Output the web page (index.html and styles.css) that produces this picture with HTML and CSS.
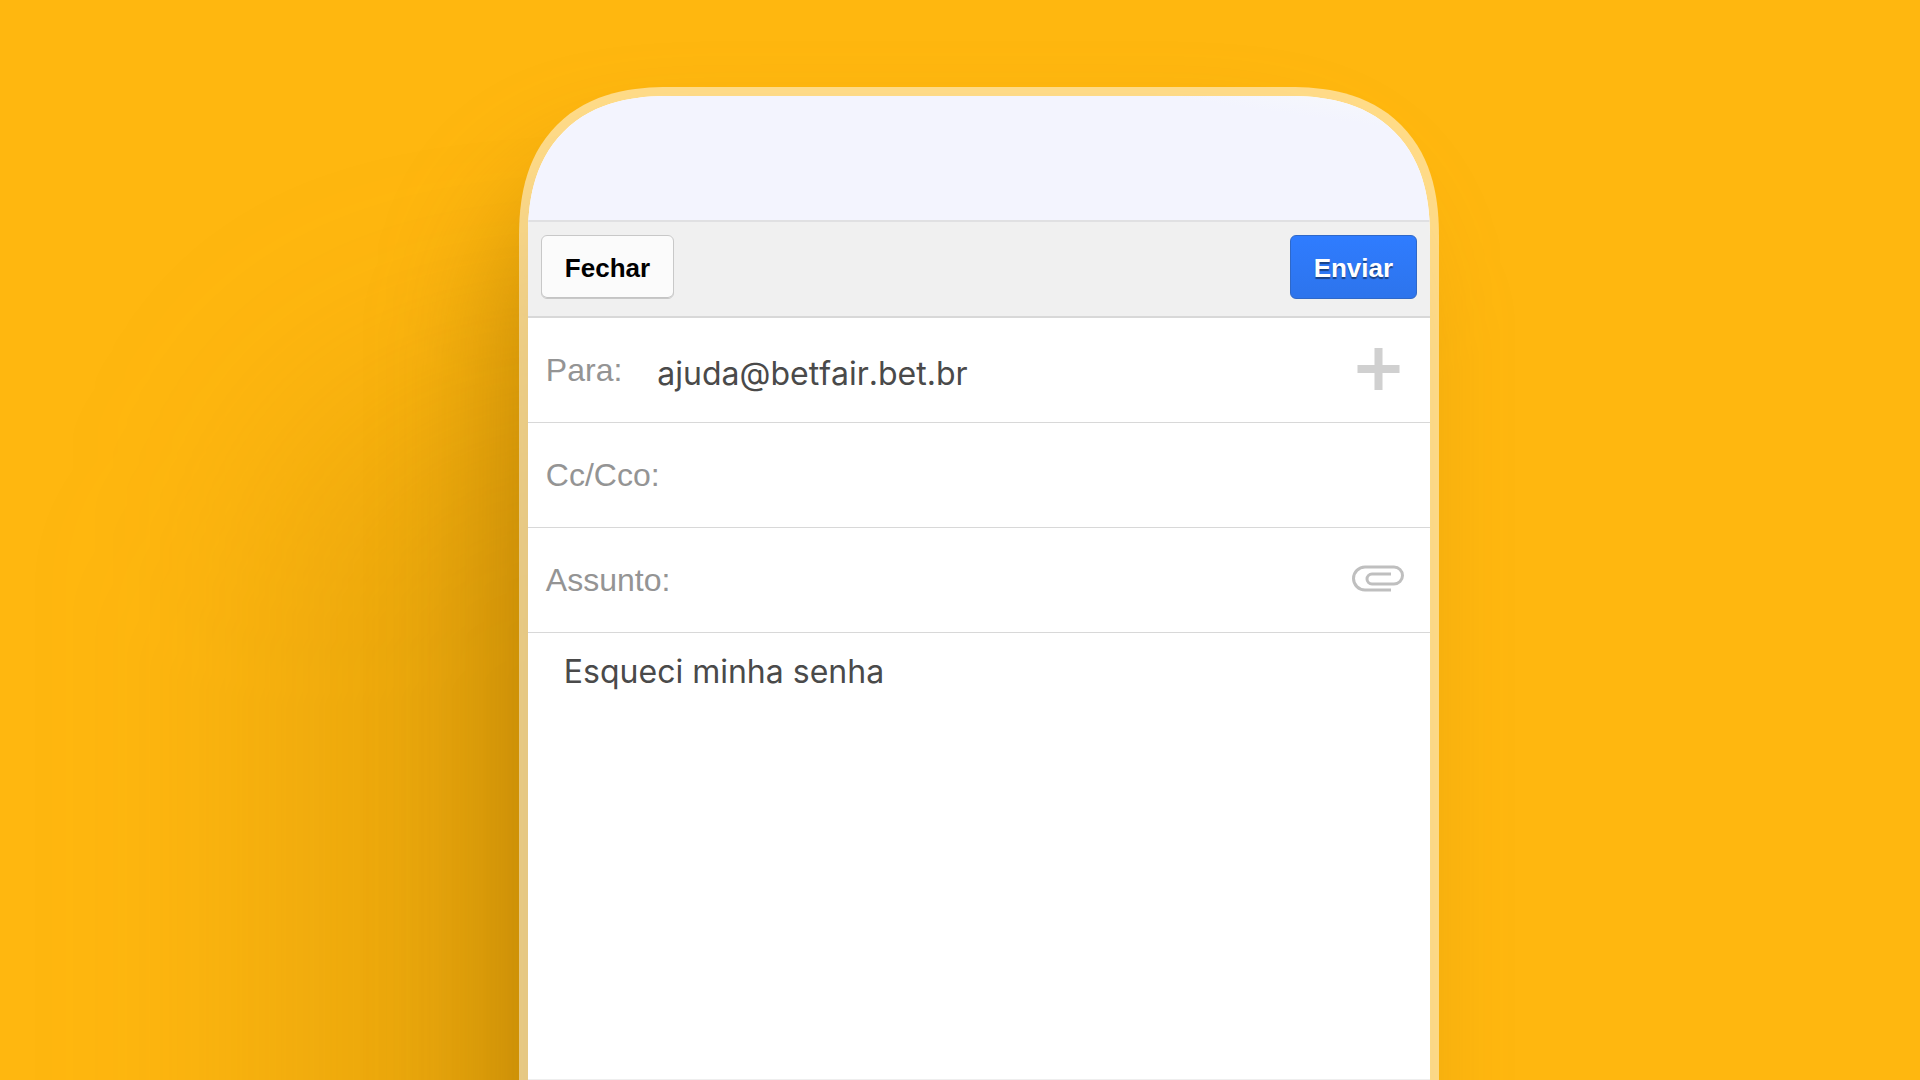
FILE: index.html
```html
<!DOCTYPE html>
<html lang="pt-BR">
<head>
    <meta charset="UTF-8">
    <meta name="viewport" content="width=device-width, initial-scale=1.0">
    <title>Nova mensagem</title>
    <link rel="stylesheet" href="styles.css">
</head>
<body>
    <main class="stage">
        <form class="phone">
            <div class="screen">
                <div class="status-bar"></div>

                <div class="toolbar">
                    <button type="button" class="btn">Fechar</button>
                    <button type="submit" class="btn btn-primary">Enviar</button>
                </div>

                <div class="field">
                    <label for="para">Para:</label>
                    <input type="email" id="para" name="para" value="ajuda@betfair.bet.br">
                    <button type="button" class="icon-btn" aria-label="Adicionar contato">
                        <svg width="52" height="44" viewBox="0 0 52 44">
                            <path d="M26.5 0v42M5.500 21h42" fill="none" stroke="#d0d0d0" stroke-width="8"/>
                        </svg>
                    </button>
                </div>

                <div class="field">
                    <label for="cc">Cc/Cco:</label>
                    <input type="text" id="cc" name="cc">
                </div>

                <div class="field">
                    <label for="assunto">Assunto:</label>
                    <input type="text" id="assunto" name="assunto">
                    <button type="button" class="icon-btn" aria-label="Anexar arquivo">
                        <svg width="52" height="30" viewBox="0 0 52 30">
                            <path d="M39 25H13A11.500 11.500 0 0 1 13 2H42A8.500 8.500 0 0 1 42 19H20A5 5 0 0 1 20 9H39" fill="none" stroke="#bfbfbf" stroke-width="3"/>
                        </svg>
                    </button>
                </div>

                <textarea class="message" name="mensagem" aria-label="Mensagem">Esqueci minha senha</textarea>
            </div>
        </form>
    </main>
</body>
</html>
```
FILE: styles.css
```css
* {
    box-sizing: border-box;
}
body {
    margin: 0;
    background-color: #ffb70f;
    font-family: "Liberation Sans", Arial, sans-serif;
}
.stage {
    display: flex;
    justify-content: center;
    height: 100vh;
    padding: 87px 0 0 38px;
    overflow: hidden;
    position: relative;
    z-index: 0;
}
.phone {
    display: flex;
    position: relative;
    width: 48.9%;
    padding: 9px 9px 0;
    border-radius: 150px 150px 0 0;
    corner-shape: superellipse(1.25);
    background-color: rgba(255, 255, 255, 0.5);
}
/* soft shadow falling to the left of the phone */
.phone::before {
    content: "";
    position: absolute;
    z-index: -1;
    top: 300px;
    bottom: -600px;
    left: -230px;
    right: 300px;
    border-radius: 200px;
    background-color: rgba(145, 100, 0, 0.22);
    filter: blur(120px);
}
.phone::after {
    content: "";
    position: absolute;
    z-index: -1;
    top: 90px;
    bottom: -300px;
    left: -20px;
    right: 60px;
    border-radius: 150px;
    background-color: rgba(145, 100, 0, 0.46);
    filter: blur(60px);
}
.screen {
    display: flex;
    flex-direction: column;
    flex: 1;
    min-width: 0;
    border-radius: 141px 141px 0 0;
    corner-shape: superellipse(1.25);
    border-bottom: 1px solid #eee;
    background-color: #fff;
    overflow: hidden;
}
.status-bar {
    height: 124px;
    background: linear-gradient(to top right, #f3f4fe 85%, #f7f9fb);
}
.toolbar {
    display: flex;
    justify-content: space-between;
    padding: 13px 13px 17px;
    border-top: 2px solid #e0e0e2;
    border-bottom: 2px solid #d8d8d8;
    background-color: #f0f0f0;
}
.btn {
    height: 64px;
    padding: 2px 23px 0;
    border: 1px solid #c8c8c8;
    border-radius: 6px;
    background-color: #fbfbfb;
    box-shadow: inset 0 -1px 0 #c4c4c4;
    color: #000;
    font-family: inherit;
    font-size: 26px;
    font-weight: bold;
    cursor: pointer;
}
.btn-primary {
    border-color: #2f68c8;
    background: linear-gradient(#2f7cff, #2d74ec);
    box-shadow: none;
    color: #fff;
    text-shadow: 0 2px 1px rgba(0, 0, 0, 0.45);
}
.field {
    display: flex;
    align-items: center;
    height: 105px;
    padding: 0 26px 0 18px;
    border-bottom: 1px solid #d8d8d8;
}
.field label {
    color: #949494;
    font-size: 32px;
}
.field input {
    flex: 1;
    min-width: 0;
    height: 64px;
    padding: 6px 0 0 35px;
    border: none;
    background: none;
}
.field input,
.message {
    color: #4a4a4a;
    font-family: Inter, sans-serif;
    font-size: 32px;
    font-kerning: none;
    outline: none;
}
.icon-btn {
    padding: 0;
    border: none;
    background: none;
    cursor: pointer;
}
.icon-btn svg {
    display: block;
}
.message {
    flex: 1;
    padding: 19px 36px;
    border: none;
    background: none;
    line-height: 40px;
    resize: none;
}
```
